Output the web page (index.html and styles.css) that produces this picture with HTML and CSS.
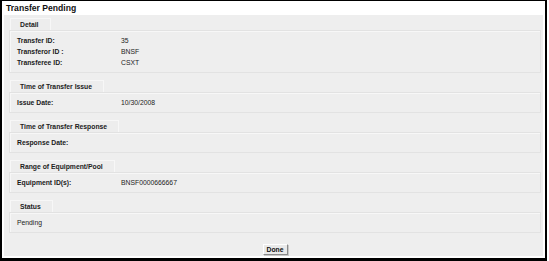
FILE: index.html
```html
<!DOCTYPE html>
<html>
<head>
<meta charset="utf-8">
<link rel="stylesheet" href="styles.css">
</head>
<body>
<div class="frame">
  <div class="title">Transfer Pending</div>
  <div class="panel">
    <div class="section first">
      <div class="tab">Detail</div>
      <div class="box">
        <div class="row"><span class="label">Transfer ID:</span><span class="value">35</span></div>
        <div class="row"><span class="label">Transferor ID :</span><span class="value">BNSF</span></div>
        <div class="row"><span class="label">Transferee ID:</span><span class="value">CSXT</span></div>
      </div>
    </div>
    <div class="section">
      <div class="tab">Time of Transfer Issue</div>
      <div class="box">
        <div class="row"><span class="label">Issue Date:</span><span class="value">10/30/2008</span></div>
      </div>
    </div>
    <div class="section">
      <div class="tab">Time of Transfer Response</div>
      <div class="box">
        <div class="row"><span class="label">Response Date:</span><span class="value"></span></div>
      </div>
    </div>
    <div class="section">
      <div class="tab">Range of Equipment/Pool</div>
      <div class="box">
        <div class="row"><span class="label">Equipment ID(s):</span><span class="value">BNSF0000666667</span></div>
      </div>
    </div>
    <div class="section">
      <div class="tab">Status</div>
      <div class="box">
        <div class="row"><span class="plain">Pending</span></div>
      </div>
    </div>
    <div class="actions">
      <button class="btn" type="button">Done</button>
    </div>
  </div>
</div>
</body>
</html>
```
FILE: styles.css
```css
html, body {
  margin: 0;
  padding: 0;
  background: #ffffff;
}

body {
  font-family: "Liberation Sans", Arial, sans-serif;
  color: #1a1a1a;
}

.frame {
  box-sizing: border-box;
  width: 547px;
  height: 261px;
  border-style: solid;
  border-color: #000000;
  border-width: 1px 2px 3px 2px;
  padding: 0 2px 2px 2px;
  display: flex;
  flex-direction: column;
  background: #ffffff;
}

.title {
  height: 14px;
  line-height: 14px;
  padding-left: 2px;
  font-size: 8.6px;
  font-weight: bold;
  color: #111111;
  flex: none;
}

.panel {
  flex: 1;
  background: #eeeeee;
  display: flex;
  flex-direction: column;
}

.section {
  margin: 7px 2px 0 5px;
  display: flex;
  flex-direction: column;
}

.section.first {
  margin-top: 3px;
}

.tab {
  align-self: flex-start;
  margin-left: 1px;
  height: 12px;
  line-height: 12px;
  padding: 0 11px 0 9px;
  font-size: 6.8px;
  font-weight: bold;
  color: #222222;
  border: 1px solid #f7f7f7;
  border-bottom: none;
  box-sizing: border-box;
  background: #ededed;
}

.box {
  border: 1px solid #e2e2e2;
  box-shadow: inset 1px 1px 0 #f7f7f7;
  padding: 4px 6px 4px 7px;
}

.row {
  display: grid;
  grid-template-columns: 104px 1fr;
  height: 11px;
  line-height: 11px;
  font-size: 6.8px;
}

.label {
  font-weight: bold;
  color: #1a1a1a;
}

.value {
  color: #222222;
}

.plain {
  color: #222222;
}

.actions {
  display: flex;
  justify-content: center;
  margin-top: 11px;
  padding-left: 3px;
}

.btn {
  width: 25px;
  height: 11px;
  padding: 0;
  margin: 0;
  font-family: "Liberation Sans", Arial, sans-serif;
  font-size: 6.8px;
  font-weight: bold;
  line-height: 9px;
  color: #111111;
  background: #e9e9e9;
  border: 1px solid;
  border-color: #ffffff #8a8a8a #8a8a8a #ffffff;
  box-shadow: 1px 1px 0 #c8c8c8;
}
```
